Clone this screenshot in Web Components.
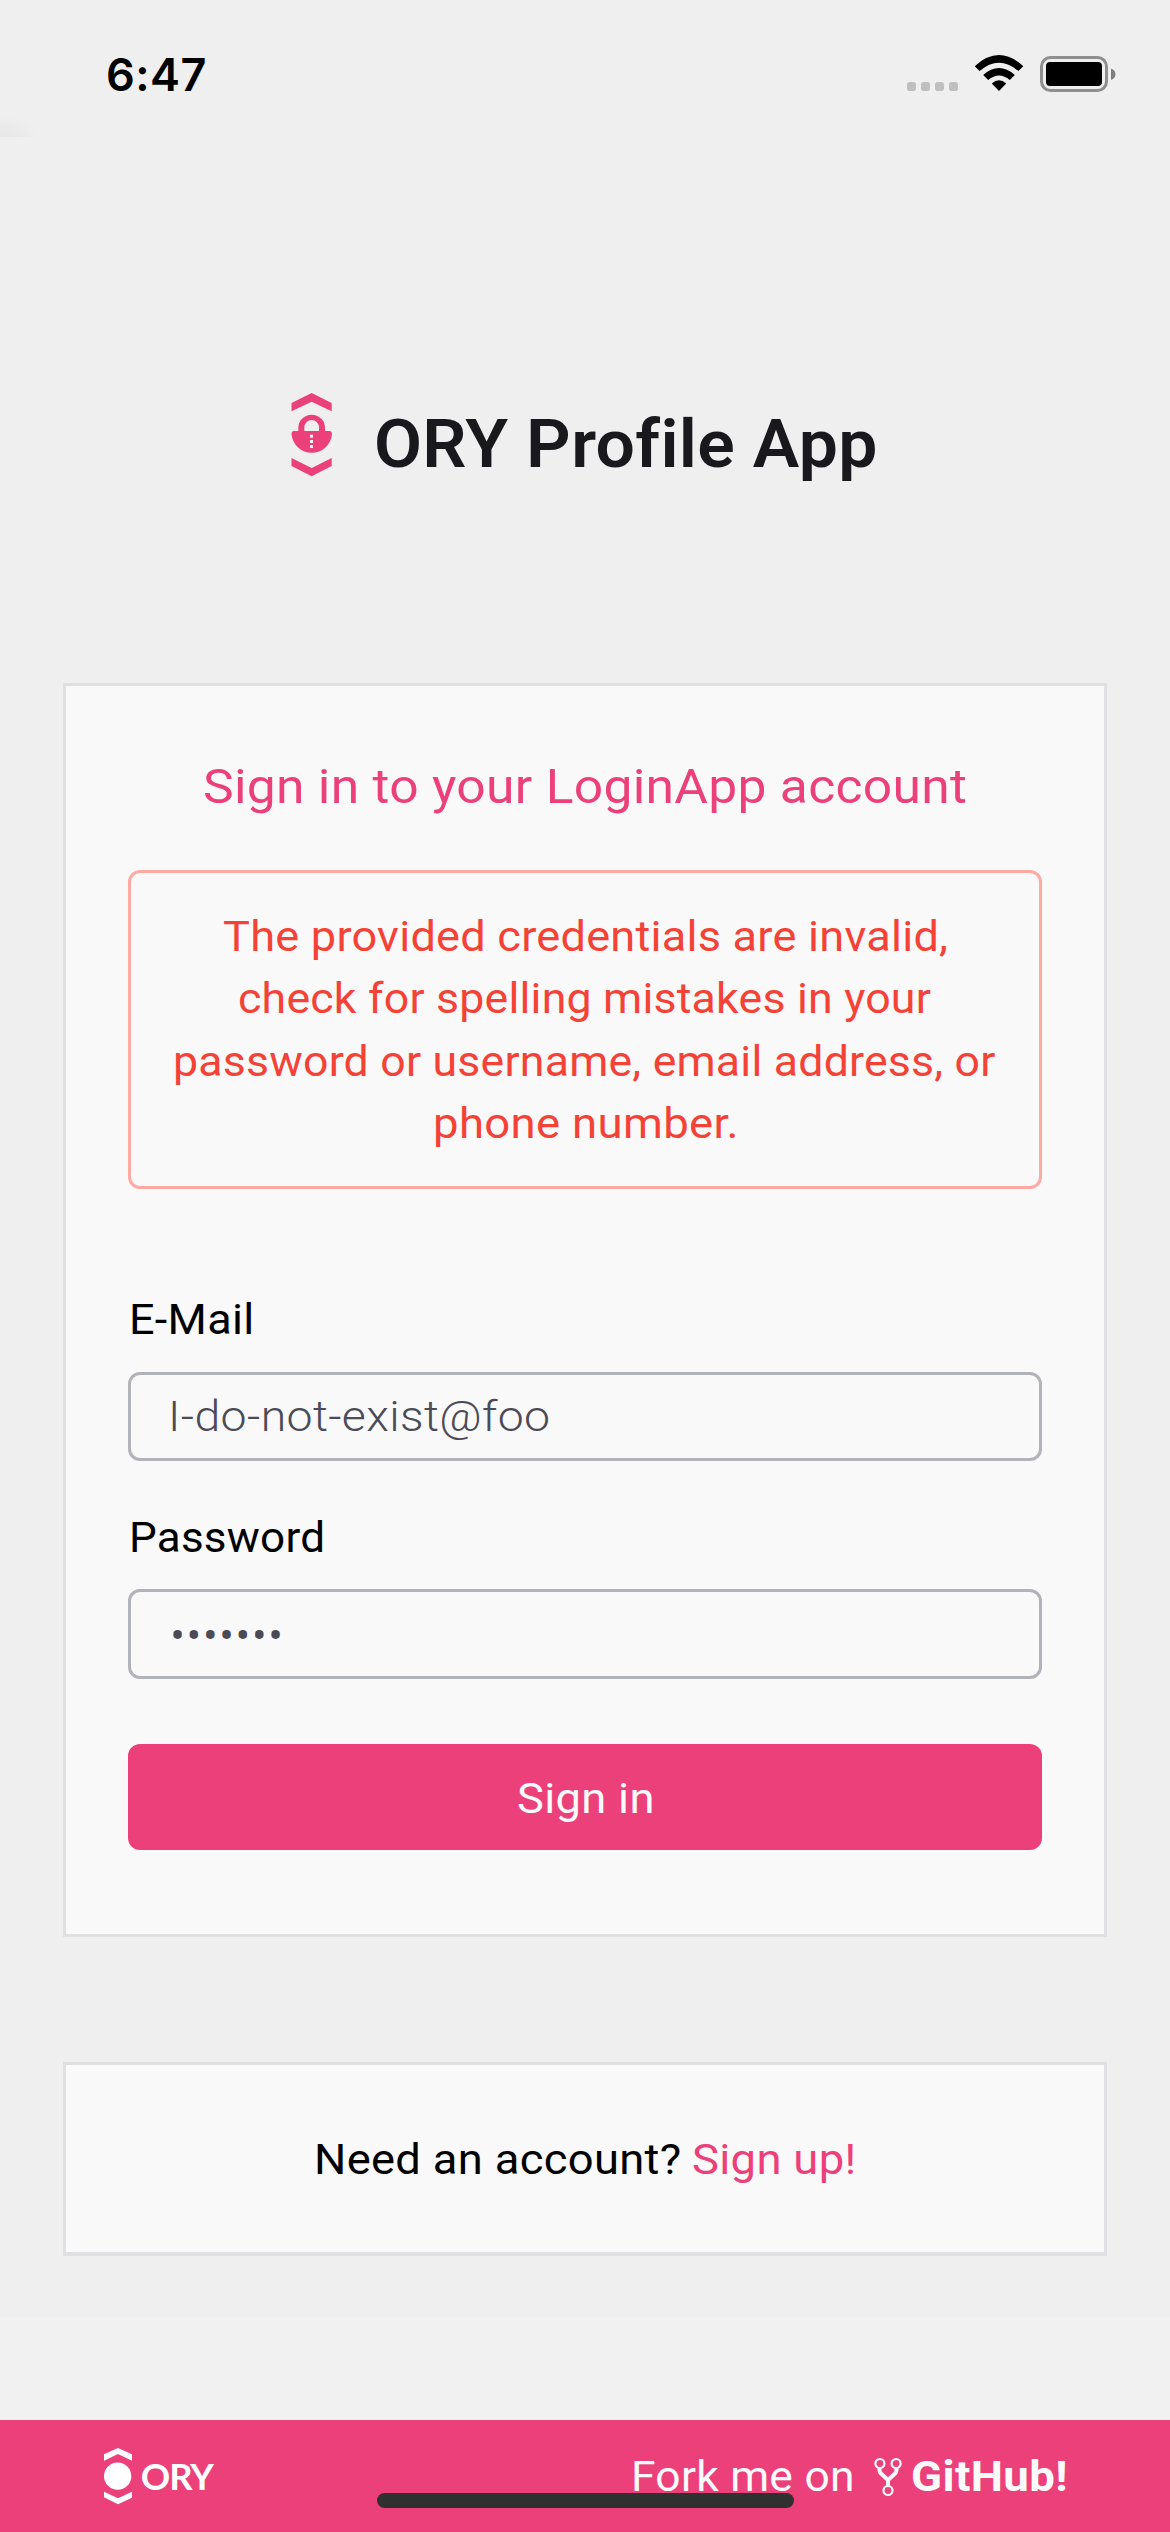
<!DOCTYPE html>
<html lang="en">
<head>
<meta charset="utf-8">
<title>ORY Profile App</title>
<style>
html,body{margin:0;padding:0}
body{width:1170px;height:2532px;overflow:hidden;background:#f1f1f1;font-family:Roboto,"Liberation Sans",sans-serif;font-size:42px;color:#000}
</style>
</head>
<body>
<profile-screen></profile-screen>
<script>
const define = (name, html, setup) => customElements.define(name, class extends HTMLElement {
  connectedCallback() {
    if (this.shadowRoot) return;
    const t = document.createElement('template');
    t.innerHTML = html;
    this.attachShadow({mode: 'open'}).append(t.content.cloneNode(true));
    if (setup) setup(this, this.shadowRoot);
  }
});

/* A single line of text whose ink spans exactly the given width.
   The glyphs are widened for most of the difference; with the "tracked"
   attribute only the space between them changes. */
define('fitted-text', `
<style>:host{display:inline-block;white-space:nowrap;flex:none}span{display:block;width:max-content;white-space:pre;transform-origin:0 50%}</style>
<span></span>`, (el, root) => {
  const span = root.querySelector('span');
  const text = el.getAttribute('text');
  const width = parseFloat(el.getAttribute('width'));
  span.textContent = text;
  const cs = getComputedStyle(span);
  const ctx = document.createElement('canvas').getContext('2d');
  ctx.font = `${cs.fontWeight} ${cs.fontSize} ${cs.fontFamily}`;
  ctx.letterSpacing = '1px';
  const m = ctx.measureText(text);
  const gaps = text.length - 1;
  const ink = m.actualBoundingBoxLeft + m.actualBoundingBoxRight - gaps;
  const stretch = el.hasAttribute('tracked') ? 1 : 1 + (width / ink - 1) * 0.85;
  span.style.letterSpacing = (width / stretch - ink) / gaps + 'px';
  span.style.transform = stretch === 1 ? 'none' : `scaleX(${stretch})`;
  span.style.marginLeft = m.actualBoundingBoxLeft * stretch + 'px';
  el.style.width = width + 'px';
});

define('status-bar', `
<style>
:host{display:flex;justify-content:space-between;align-items:center;box-sizing:border-box;height:137px;padding:0 54px 0 108px;
 background:radial-gradient(ellipse 32px 22px at 6px 137px,#e7e7e7,rgba(239,239,239,0)) #efefef}
.time{font:600 45px/54px Inter,sans-serif;padding-top:14px;box-sizing:border-box;margin-bottom:1px}
svg{display:block}
</style>
<div class="time"><fitted-text tracked text="6:47" width="97.500"></fitted-text></div>
<svg width="209" height="137" viewBox="907 0 209 137">
 <g fill="#bfbfbf"><rect x="907" y="82" width="9" height="9" rx="2.8"/><rect x="921" y="82" width="9" height="9" rx="2.8"/><rect x="935" y="82" width="9" height="9" rx="2.8"/><rect x="949" y="82" width="9" height="9" rx="2.8"/></g>
 <path d="M974.7 66.2Q999 44 1023.3 66.2L1018.4 71Q999 54.5 979.6 71Z"/>
 <path d="M983.2 75Q999 61.2 1014.8 75L1009.8 80Q999 70.8 988.2 80Z"/>
 <path d="M991.8 83.4Q999 77.2 1006.2 83.4L999 91Z"/>
 <rect x="1041.5" y="57.5" width="65" height="33" rx="9" fill="none" stroke="#8f8f8f" stroke-width="3"/>
 <rect x="1046" y="62" width="56" height="24" rx="4"/>
 <path d="M1111 68.5Q1115.4 70 1115.4 74.2Q1115.4 78.4 1111 80Z" fill="#7f7f7f"/>
</svg>`);

define('brand-header', `
<style>
:host{display:flex;align-items:flex-start;padding:256px 0 0 291px;height:290px}
svg{display:block;flex:none;width:41px;height:84px;margin-right:45px}
.title{font-weight:600;font-size:66px;line-height:84px;color:#19191d;padding-top:9.5px}
</style>
<svg viewBox="63 39 123 252">
 <g fill="#ec407a">
 <path d="M64.500 69L125 39L185 69V94L125 65L64.500 94Z"/>
 <path d="M64.500 234L125 264L185 234V258L125 289L64.500 258Z"/>
 <path d="M85 153V143A40 39 0 0 1 165 143V153H178Q186 153 186 162A61 62 0 0 1 64.500 162Q64.500 153 72 153ZM103 153H147V142A22 22 0 0 0 103 142Z"/></g>
 <g fill="#f3f3f3"><rect x="120" y="164" width="9" height="9"/><rect x="120" y="180" width="9" height="9"/><rect x="120" y="195" width="9" height="9"/></g>
</svg>
<div class="title"><fitted-text text="ORY Profile App" width="498"></fitted-text></div>`);

define('panel-card', `
<style>:host{display:flex;flex-direction:column;box-sizing:border-box;margin:0 63px;background:#f9f9fa;border:3px solid #e0e0e2}</style>
<slot></slot>`);

define('card-heading', `
<style>:host{display:flex;justify-content:center;font-size:48px;line-height:62px;color:#ec407a}</style>
<slot></slot>`);

define('error-message', `
<style>:host{display:flex;flex-direction:column;align-items:center;box-sizing:border-box;height:319px;margin-top:52px;padding-top:33px;
 border:3px solid #ffa9a3;border-radius:12px;color:#f44336;line-height:62.4px}</style>
<slot></slot>`);

define('form-field', `
<style>
:host{display:flex;flex-direction:column}
.label{line-height:50px;padding-left:4px;display:flex}
.box{display:flex;align-items:center;box-sizing:border-box;border:3px solid #b2b2b9;border-radius:12px;height:var(--box-h);margin-top:var(--box-gap);padding-left:41.500px;color:#4b4b58;font-weight:300}
</style>
<div class="label"><slot name="label"></slot></div>
<div class="box"><slot></slot></div>`);

define('primary-button', `
<style>:host{display:flex;align-items:center;justify-content:center;box-sizing:border-box;height:106px;margin-top:65px;padding-top:2px;border-radius:12px;background:#ec407a;color:#fafafa}</style>
<slot></slot>`);

define('app-footer', `
<style>
:host{display:flex;justify-content:space-between;align-items:center;box-sizing:border-box;height:112px;padding:0 104.4px 0 104px;background:#ec407a;color:#fafafa}
.logo{display:flex;align-items:center;font:700 36.5px/44px Lato,sans-serif;color:#fff}
.logo svg{margin-right:9.500px}
.fork{display:flex;align-items:center;line-height:50px;padding-top:1px}
.fork svg{margin:1px 9.200px 0 22px}
b{font-weight:700;display:flex}
svg{display:block;flex:none}
</style>
<div class="logo">
 <svg width="28.300" height="57" viewBox="72 143 85 171" fill="#fff"><path d="M72 162L114 143L156 162V181L114 161L72 181ZM72 274L114 294L156 274V292L114 312L72 291Z"/><circle cx="113" cy="227.500" r="41"/></svg>
 <fitted-text tracked text="ORY" width="72.500"></fitted-text>
</div>
<div class="fork">
 <fitted-text text="Fork me on" width="218"></fitted-text>
 <svg width="28" height="40" viewBox="0 0 28 40" fill="none" stroke="#fafafa">
  <g stroke-width="2.200"><circle cx="5.900" cy="6.500" r="4.500"/><circle cx="22.100" cy="6.500" r="4.500"/><circle cx="14" cy="33.500" r="4.500"/></g>
  <path stroke-width="4" d="M5.500 11V13Q5.500 15 7 16.500L14 23L21 16.500Q22.500 15 22.500 13V11M14 23V29"/>
 </svg>
 <b><fitted-text text="GitHub!" width="154"></fitted-text></b>
</div>`);

define('profile-screen', `
<style>
:host{display:flex;flex-direction:column;position:relative;width:1170px;height:2532px}
main{display:flex;flex-direction:column;height:2180px;background:#efefef}
.login{height:1254px;padding:70px 62px 0}
.signup{height:194px;margin-top:125px;border-bottom-width:4px;padding-top:2px;flex-direction:row;justify-content:center;align-items:center}
.signup .link{color:#ec407a;margin-left:12.500px}
.mail{--box-h:89px;--box-gap:27px;margin-top:106px}
.pass{--box-h:90px;--box-gap:26px;margin-top:52px}
.bullets{font-size:42px;font-weight:400;line-height:50px;padding-top:4px}
app-footer{margin-top:103px}
.home{position:absolute;left:377px;top:2493px;width:417px;height:15px;border-radius:8px;background:#303030}
</style>
<status-bar></status-bar>
<main>
 <brand-header></brand-header>
 <panel-card class="login">
  <card-heading><fitted-text text="Sign in to your LoginApp account" width="762"></fitted-text></card-heading>
  <error-message>
   <fitted-text text="The provided credentials are invalid," width="722.500"></fitted-text>
   <fitted-text text="check for spelling mistakes in your" width="691.500"></fitted-text>
   <fitted-text text="password or username, email address, or" width="820"></fitted-text>
   <fitted-text text="phone number." width="300"></fitted-text>
  </error-message>
  <form-field class="mail"><fitted-text slot="label" text="E-Mail" width="119.500"></fitted-text><fitted-text text="I-do-not-exist@foo" width="376"></fitted-text></form-field>
  <form-field class="pass"><fitted-text slot="label" text="Password" width="190"></fitted-text><fitted-text tracked class="bullets" text="•••••••" width="108"></fitted-text></form-field>
  <primary-button><fitted-text text="Sign in" width="134"></fitted-text></primary-button>
 </panel-card>
 <panel-card class="signup"><fitted-text text="Need an account?" width="363"></fitted-text><fitted-text class="link" text="Sign up!" width="160"></fitted-text></panel-card>
</main>
<app-footer></app-footer>
<div class="home"></div>`);
</script>
</body>
</html>
